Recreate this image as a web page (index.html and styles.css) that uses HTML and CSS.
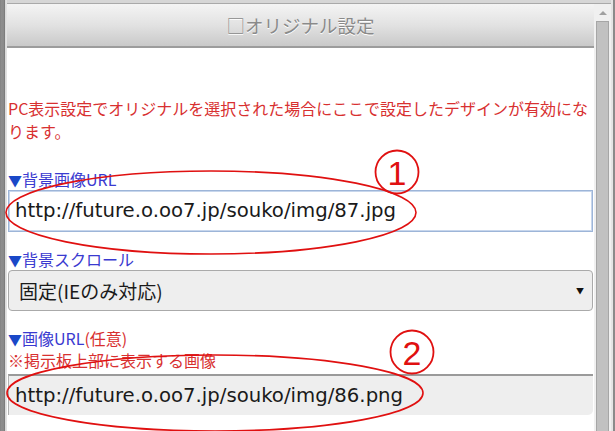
FILE: index.html
```html
<!DOCTYPE html>
<html lang="ja">
<head>
<meta charset="utf-8">
<title>オリジナル設定</title>
<link rel="stylesheet" href="styles.css">
</head>
<body>
<div class="window">
  <div class="frame-left"></div>
  <div class="main">
    <div class="topstrip"></div>
    <div class="header">□オリジナル設定</div>
    <div class="content">
      <p class="notice">PC表示設定でオリジナルを選択された場合にここで設定したデザインが有効になります。</p>
      <div class="field field-first">
        <div class="label"><span class="tri">▼</span>背景画像URL</div>
        <div class="input input-focus">http://future.o.oo7.jp/souko/img/87.jpg</div>
      </div>
      <div class="field">
        <div class="label"><span class="tri">▼</span>背景スクロール</div>
        <div class="select"><span>固定(IEのみ対応)</span><span class="arrow">▼</span></div>
      </div>
      <div class="field">
        <div class="label label-tight"><span class="tri">▼</span>画像URL<span class="red">(任意)</span></div>
        <div class="note">※掲示板上部に表示する画像</div>
        <div class="input input-gray">http://future.o.oo7.jp/souko/img/86.png</div>
      </div>
    </div>
  </div>
  <div class="scroll">
    <div class="topstrip"></div>
    <div class="scroll-body">
      <div class="scroll-up"></div>
      <div class="thumb"></div>
    </div>
  </div>
  <div class="frame-right"></div>

  <svg class="marks" width="615" height="431" viewBox="0 0 615 431" aria-hidden="true">
    <ellipse cx="211" cy="212.5" rx="205" ry="41.5" fill="none" stroke="#e01010" stroke-width="1.6"/>
    <ellipse cx="215" cy="393" rx="208" ry="38" fill="none" stroke="#e01010" stroke-width="1.6"/>
    <circle cx="397" cy="172" r="21.5" fill="none" stroke="#e01010" stroke-width="1.8"/>
    <text x="397" y="184.5" text-anchor="middle" class="num">1</text>
    <circle cx="412" cy="352" r="21.5" fill="none" stroke="#e01010" stroke-width="1.8"/>
    <text x="412" y="364.5" text-anchor="middle" class="num">2</text>
  </svg>
</div>
</body>
</html>
```

FILE: styles.css
```css
html, body {
  margin: 0;
  padding: 0;
  background: #ffffff;
}

.window {
  position: relative;
  display: flex;
  width: 615px;
  height: 431px;
  overflow: hidden;
  font-family: "Noto Sans CJK JP", "Noto Sans", sans-serif;
}

.frame-left {
  width: 7px;
  flex: none;
  background: linear-gradient(to right, #7e7e7e 0, #8e8e8e 1px, #8a8a8a 4px, #6f6f6f 5px, #d8d8d8 5px, #e6e6e6 7px);
}

.frame-right {
  width: 4px;
  flex: none;
  background: linear-gradient(to right, #e4e4e4 0, #e4e4e4 2px, #8a8a8a 2px, #8a8a8a 4px);
}

.main {
  flex: 1;
  display: flex;
  flex-direction: column;
  min-width: 0;
}

.topstrip {
  height: 3px;
  background: #d6d6d6;
  border-bottom: 1px solid #a9a9a9;
  flex: none;
}

.header {
  height: 42px;
  flex: none;
  border-bottom: 2px solid #9c9c9c;
  background: linear-gradient(to bottom, #f4f4f4 0%, #e2e2e2 50%, #c9c9c9 100%);
  color: #8a8a8a;
  text-shadow: 0 1px 0 #ffffff;
  font-size: 18.5px;
  line-height: 42px;
  text-align: center;
}

.content {
  flex: 1;
  background: #ffffff;
  padding: 0 1px;
}

.notice {
  margin: 49px 0 0 0;
  color: #d83030;
  font-size: 16px;
  line-height: 23px;
}

.field {
  margin-top: 17px;
}

.field-first {
  margin-top: 26px;
}

.label {
  color: #3a3ad0;
  font-size: 16px;
  line-height: 20px;
  height: 20px;
  margin-bottom: 1px;
}

.label-tight {
  margin-bottom: 2px;
}

.tri {
  color: #1a48c8;
  font-size: 14px;
}

.red {
  color: #d83030;
}

.note {
  color: #d83030;
  font-size: 16px;
  line-height: 20px;
  height: 20px;
  margin-bottom: 4px;
}

.input {
  box-sizing: border-box;
  height: 42px;
  padding: 0 6px;
  font-family: "DejaVu Sans", "Noto Sans", sans-serif;
  font-size: 19.7px;
  line-height: 40px;
  color: #1a1a1a;
  white-space: nowrap;
}

.input-focus {
  border: 1px solid #9db5d8;
  box-shadow: inset 0 0 0 1px #c7d6ec;
  background: #ffffff;
}

.input-gray {
  height: 41px;
  background: #eeeeee;
  border-top: 2px solid #9a9a9a;
  border-left: 1px solid #b0b0b0;
  border-radius: 0 0 5px 0;
  line-height: 39px;
}

.select {
  box-sizing: border-box;
  height: 41px;
  display: flex;
  align-items: center;
  justify-content: space-between;
  padding: 0 8px 0 10px;
  background: #eeeeee;
  border: 1px solid #aaaaaa;
  border-radius: 4px;
  font-size: 19px;
  color: #1a1a1a;
}

.arrow {
  font-size: 8px;
  color: #111111;
}

.scroll {
  width: 17px;
  flex: none;
  display: flex;
  flex-direction: column;
}

.scroll-body {
  flex: 1;
  position: relative;
  background: #f0f0f0;
  display: flex;
  flex-direction: column;
  align-items: center;
}

.scroll-up {
  margin-top: 7px;
  width: 0;
  height: 0;
  border-left: 4px solid transparent;
  border-right: 4px solid transparent;
  border-bottom: 4px solid #a0a0a0;
}

.thumb {
  margin-top: 6px;
  flex: 1;
  width: 11px;
  background: #c1c1c1;
  border: 1px solid #a6a6a6;
  border-bottom: 0;
}

.marks {
  position: absolute;
  left: 0;
  top: 0;
  pointer-events: none;
}

.num {
  font-family: "Liberation Sans", sans-serif;
  font-size: 34px;
  fill: #e01010;
}
```
